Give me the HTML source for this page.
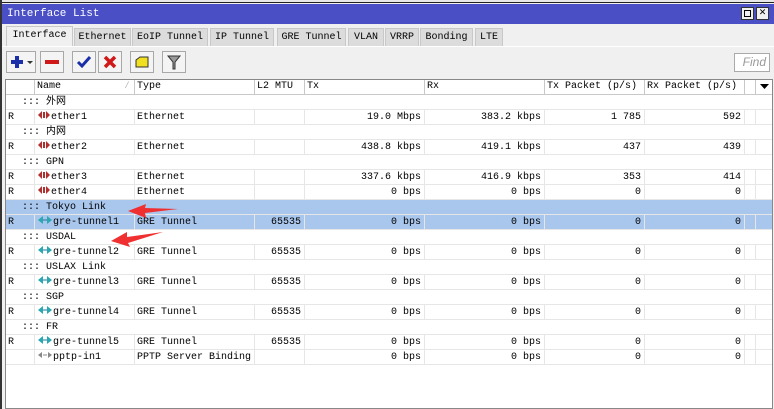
<!DOCTYPE html>
<html><head><meta charset="utf-8"><style>
*{margin:0;padding:0;box-sizing:border-box}
body{width:774px;height:409px;overflow:hidden;background:#f0f0f0;position:relative;font-family:"Liberation Mono","Noto Sans CJK SC",monospace;font-size:10px;color:#000}
.a{position:absolute}
.title{left:2px;top:4px;width:772px;height:20px;background:#4a4fc6;color:#fff;font-size:11px;line-height:20px;padding-left:5px}
.tab{position:absolute;top:28px;height:18px;line-height:18px;background:#dcdcdc;border:1px solid #c8c8c8;border-bottom:none;text-align:center}
.btn{position:absolute;top:51px;height:22px;border:1px solid #a8a8a8;background:#f4f4f4}
.tbl{left:5px;top:79px;width:768px;height:330px;background:#fff;border:1px solid #888}
.hdr{position:absolute;top:0;height:15px;border-right:1px solid #c8c8c8;border-bottom:1px solid #c8c8c8;background:#fff;line-height:14px;padding-left:2px}
.row{position:absolute;left:0;width:766px;height:15px;line-height:15px;border-bottom:1px solid #e6e6e6}
.c{position:absolute;top:0;height:15px;border-right:1px solid #e6e6e6;white-space:nowrap;overflow:hidden}
.r{text-align:right;padding-right:3px}
.sel{background:#a9c6ec}
</style></head><body>
<div class="a" style="left:0;top:0;width:774px;height:3px;background:#e8e8e8;border-bottom:1px solid #222"></div>
<div class="a" style="left:0;top:0;width:2px;height:409px;background:#333"></div>
<div class="a title">Interface List</div>
<div class="a" style="left:741px;top:7px;width:13px;height:13px;background:#f0f0f0;border:1px solid #333"><div style="margin:2px;width:7px;height:7px;border:1px solid #000"></div></div>
<div class="a" style="left:756px;top:7px;width:13px;height:13px;background:#f0f0f0;border:1px solid #333;font-size:11px;line-height:11px;text-align:center;font-weight:bold">✕</div>

<div class="tab" style="left:6px;width:67px;top:26px;height:20px;background:#f0f0f0">Interface</div>
<div class="tab" style="left:74px;width:57px">Ethernet</div>
<div class="tab" style="left:132px;width:76px">EoIP Tunnel</div>
<div class="tab" style="left:210px;width:64px">IP Tunnel</div>
<div class="tab" style="left:277px;width:69px">GRE Tunnel</div>
<div class="tab" style="left:348px;width:36px">VLAN</div>
<div class="tab" style="left:385px;width:34px">VRRP</div>
<div class="tab" style="left:420px;width:53px">Bonding</div>
<div class="tab" style="left:475px;width:28px">LTE</div>
<div class="a" style="left:2px;top:46px;width:772px;height:1px;background:#fff"></div>

<div class="btn" style="left:6px;width:30px"><svg width="28" height="20"><path d="M4 10h12M10 4v12" stroke="#1b2fa8" stroke-width="4"/><path d="M20 9h6l-3 3z" fill="#333"/></svg></div>
<div class="btn" style="left:40px;width:24px"><svg width="22" height="20"><rect x="4" y="8" width="14" height="4" fill="#d01818"/></svg></div>
<div class="btn" style="left:72px;width:24px"><svg width="22" height="20"><path d="M5 10l4 4 8-9" stroke="#1a2ea8" stroke-width="3" fill="none"/></svg></div>
<div class="btn" style="left:98px;width:24px"><svg width="22" height="20"><path d="M6 5l10 10M16 5L6 15" stroke="#d01818" stroke-width="3.5"/></svg></div>
<div class="btn" style="left:130px;width:24px"><svg width="22" height="20"><path d="M5 8l4-3h8v10H5z" fill="#f0e020" stroke="#333"/></svg></div>
<div class="btn" style="left:162px;width:24px"><svg width="22" height="20"><path d="M5 4h12l-5 6v7h-2v-7z" fill="#999" stroke="#333"/></svg></div>
<div class="a" style="left:734px;top:53px;width:36px;height:19px;background:#fff;border:1px solid #aaa;color:#999;font-family:'Liberation Sans',sans-serif;font-style:italic;font-size:12px;line-height:17px;text-align:right;padding-right:3px">Find</div>

<div class="a tbl">
<div class="hdr" style="left:0;width:29px"></div>
<div class="hdr" style="left:29px;width:100px">Name<span style="position:absolute;right:4px;color:#999">⁄</span></div>
<div class="hdr" style="left:129px;width:120px">Type</div>
<div class="hdr" style="left:249px;width:50px">L2 MTU</div>
<div class="hdr" style="left:299px;width:120px">Tx</div>
<div class="hdr" style="left:419px;width:120px">Rx</div>
<div class="hdr" style="left:539px;width:100px">Tx Packet (p/s)</div>
<div class="hdr" style="left:639px;width:100px">Rx Packet (p/s)</div>
<div class="hdr" style="left:739px;width:11px"></div>
<div class="hdr" style="left:750px;width:16px;border-right:none"><svg width="12" height="12"><path d="M2 4h9l-4.5 5z" fill="#000"/></svg></div>
<div id="rows"></div>
</div>

<svg class="a" style="left:0;top:0" width="774" height="409">
<path d="M128 211 L146 204 L145 208 L178 209 L145 213 L146 218 Z" fill="#f03030"/>
<path d="M111 241 L127 232 L127 237 L163 232 L128 243 L130 247 Z" fill="#f03030"/>
</svg>

<script>
var eth='<svg width="14" height="10" style="vertical-align:-1px"><path d="M1 5l4-4v8z M13 5l-4-4v8z" fill="#b03030"/><rect x="6" y="2" width="2" height="6" fill="#b03030"/></svg>';
var gre='<svg width="16" height="10" style="vertical-align:-1px"><path d="M1 5l5-4v8z M15 5l-5-4v8z" fill="#2aa8b0"/><path d="M6 5h4" stroke="#2a70a0"/></svg>';
var ppp='<svg width="16" height="10" style="vertical-align:-1px"><path d="M1 5l4-3v6z M15 5l-4-3v6z" fill="#888"/><path d="M6 5h4" stroke="#888"/></svg>';
var R=[
['g','::: 外网'],
['d','R',eth,'ether1','Ethernet','','19.0 Mbps','383.2 kbps','1 785','592'],
['g','::: 内网'],
['d','R',eth,'ether2','Ethernet','','438.8 kbps','419.1 kbps','437','439'],
['g','::: GPN'],
['d','R',eth,'ether3','Ethernet','','337.6 kbps','416.9 kbps','353','414'],
['d','R',eth,'ether4','Ethernet','','0 bps','0 bps','0','0'],
['gs','::: Tokyo Link'],
['ds','R',gre,'gre-tunnel1','GRE Tunnel','65535','0 bps','0 bps','0','0'],
['g','::: USDAL'],
['d','R',gre,'gre-tunnel2','GRE Tunnel','65535','0 bps','0 bps','0','0'],
['g','::: USLAX Link'],
['d','R',gre,'gre-tunnel3','GRE Tunnel','65535','0 bps','0 bps','0','0'],
['g','::: SGP'],
['d','R',gre,'gre-tunnel4','GRE Tunnel','65535','0 bps','0 bps','0','0'],
['g','::: FR'],
['d','R',gre,'gre-tunnel5','GRE Tunnel','65535','0 bps','0 bps','0','0'],
['d','',ppp,'pptp-in1','PPTP Server Binding','','0 bps','0 bps','0','0']];
var cols=[[0,29],[29,100],[129,120],[249,50],[299,120],[419,120],[539,100],[639,100],[739,11]];
var h='';
R.forEach(function(r,i){
 var top=15+i*15, s=r[0].indexOf('s')>0?' sel':'';
 if(r[0][0]=='g'){h+='<div class="row'+s+'" style="top:'+top+'px;padding-left:16px">'+r[1]+'</div>';}
 else{
  var v=[r[1],r[2]+r[3],r[4],r[5],r[6],r[7],r[8],r[9],''];
  h+='<div class="row'+s+'" style="top:'+top+'px">';
  cols.forEach(function(c,j){h+='<div class="c'+(j>=3&&j<8?' r':'')+'" style="left:'+c[0]+'px;width:'+c[1]+'px;padding-left:'+(j<3?'2px':'0')+'">'+v[j]+'</div>';});
  h+='</div>';
 }
});
document.getElementById('rows').innerHTML=h;
</script>
</body></html>
